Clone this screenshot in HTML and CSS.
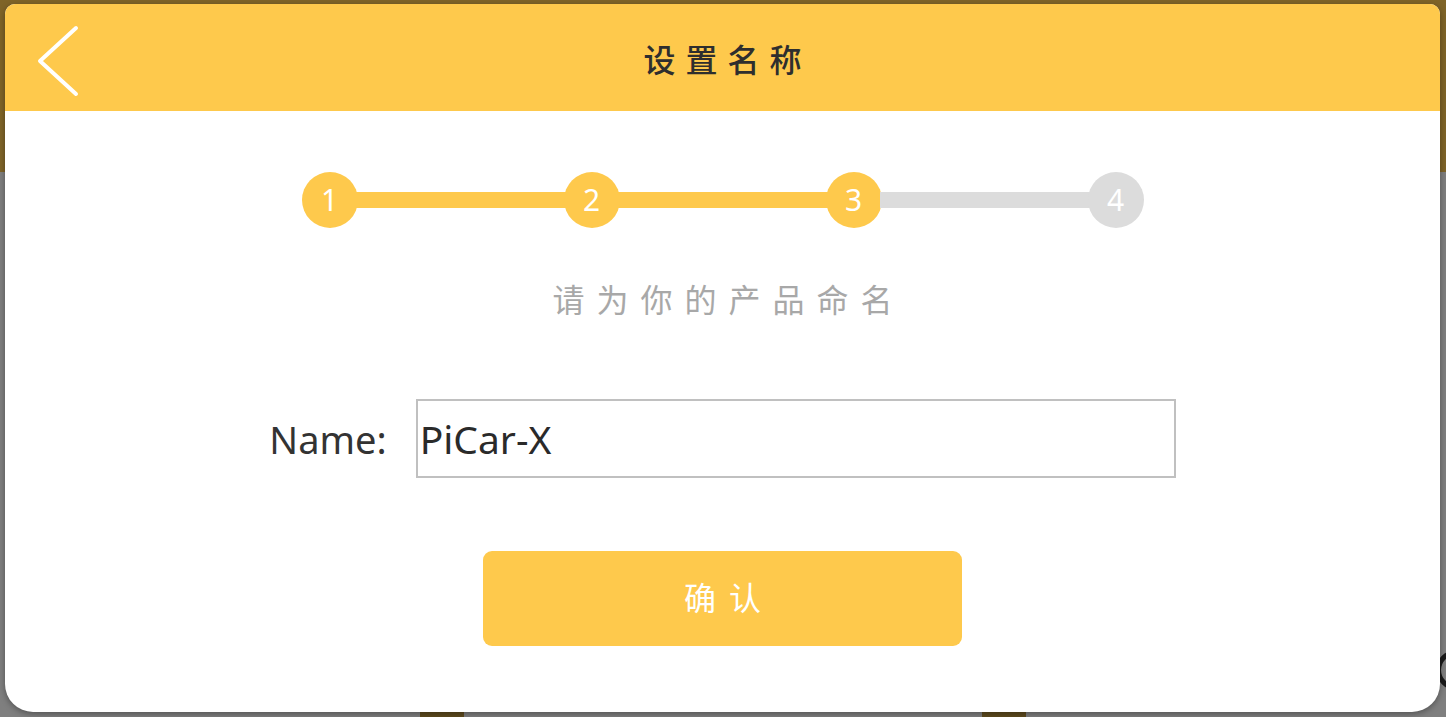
FILE: index.html
```html
<!DOCTYPE html>
<html lang="zh">
<head>
<meta charset="utf-8">
<title>设置名称</title>
<link rel="stylesheet" href="styles.css">
</head>
<body>
<div class="backdrop">
  <div class="bd-top"></div>
  <div class="bd-bottom">
    <span class="bd-block bd-block-a"></span>
    <span class="bd-block bd-block-b"></span>
    <span class="bd-ring"></span>
  </div>
</div>

<div class="modal">
  <header class="modal-header">
    <button class="back-btn" aria-label="返回">
      <svg width="44" height="72" viewBox="0 0 44 72"><polyline points="40,3 4,36 40,69" fill="none" stroke="#fff" stroke-width="4" stroke-linecap="round" stroke-linejoin="round"/></svg>
    </button>
    <h1 class="modal-title">设置名称</h1>
  </header>

  <main class="modal-body">
    <div class="stepper">
      <span class="step done">1</span>
      <span class="step-line done"></span>
      <span class="step done">2</span>
      <span class="step-line done"></span>
      <span class="step done">3</span>
      <span class="step-line"></span>
      <span class="step">4</span>
    </div>

    <p class="hint">请为你的产品命名</p>

    <div class="name-row">
      <label class="name-label" for="name">Name:</label>
      <input class="name-input" id="name" type="text" value="PiCar-X">
    </div>

    <button class="confirm-btn">确认</button>
  </main>
</div>
</body>
</html>
```

FILE: styles.css
```css
* { box-sizing: border-box; }

html, body {
  margin: 0;
  padding: 0;
  width: 1446px;
  height: 717px;
  overflow: hidden;
  font-family: "Noto Sans", "Noto Sans CJK SC", sans-serif;
}

.backdrop {
  position: absolute;
  inset: 0;
  display: flex;
  flex-direction: column;
}

.bd-top {
  height: 172px;
  background: #7f6428;
}

.bd-bottom {
  flex: 1;
  background: #7f7f7f;
  position: relative;
}

.bd-block {
  position: absolute;
  bottom: 0;
  width: 44px;
  height: 10px;
  background: #5f4b1e;
}
.bd-block-a { left: 420px; }
.bd-block-b { left: 982px; }

.bd-ring {
  position: absolute;
  left: 1436px;
  top: 478px;
  width: 40px;
  height: 40px;
  border: 5px solid #1a1a1a;
  border-radius: 50%;
}

.modal {
  position: absolute;
  left: 5px;
  top: 4px;
  width: 1435px;
  height: 708px;
  background: #fff;
  border-radius: 10px 10px 28px 28px;
  overflow: hidden;
  box-shadow: 0 2px 6px rgba(0, 0, 0, 0.35);
  display: flex;
  flex-direction: column;
}

.modal-header {
  height: 107px;
  flex: none;
  background: #fec94c;
  display: flex;
  align-items: center;
  justify-content: center;
  position: relative;
}

.back-btn {
  position: absolute;
  left: 31px;
  top: 21px;
  padding: 0;
  border: 0;
  background: none;
  width: 44px;
  height: 72px;
}
.back-btn svg { display: block; }

.modal-title {
  margin: 0 -10px 0 0;
  font-family: "Noto Sans CJK SC", sans-serif;
  font-size: 32px;
  font-weight: 500;
  color: #2e2e2e;
  letter-spacing: 10px;
  line-height: 1;
}

.modal-body {
  flex: 1;
  display: flex;
  flex-direction: column;
  align-items: center;
  padding-top: 61px;
}

.stepper {
  width: 842px;
  display: flex;
  align-items: center;
}

.step {
  width: 56px;
  height: 56px;
  flex: none;
  border-radius: 50%;
  background: #dcdcdc;
  color: #fff;
  font-size: 30px;
  line-height: 56px;
  text-align: center;
  font-family: "Noto Sans", sans-serif;
}
.step.done { background: #fec94c; }

.step-line {
  flex: 1;
  height: 16px;
  margin: 0 -2px;
  background: #dcdcdc;
}
.step-line.done { background: #fec94c; }

.hint {
  margin: 50px -12px 0 0;
  font-family: "Noto Sans CJK SC", sans-serif;
  font-size: 32px;
  line-height: 40px;
  color: #a8a8a8;
  letter-spacing: 12px;
}

.name-row {
  margin-top: 81px;
  display: flex;
  align-items: center;
  gap: 29px;
}

.name-label {
  font-size: 38px;
  color: #333;
  line-height: 1;
}

.name-input {
  width: 760px;
  height: 79px;
  border: 2px solid #c0c0c0;
  padding: 0 0 0 2px;
  font-family: "Noto Sans", sans-serif;
  font-size: 39px;
  color: #2a2a2a;
  outline: none;
  background: #fff;
}

.confirm-btn {
  margin-top: 73px;
  width: 479px;
  height: 95px;
  border: 0;
  border-radius: 9px;
  background: #fec94c;
  color: #fff;
  font-family: "Noto Sans CJK SC", sans-serif;
  font-size: 32px;
  letter-spacing: 13px;
  text-indent: 13px;
  padding: 0 0 6px;
}
```
